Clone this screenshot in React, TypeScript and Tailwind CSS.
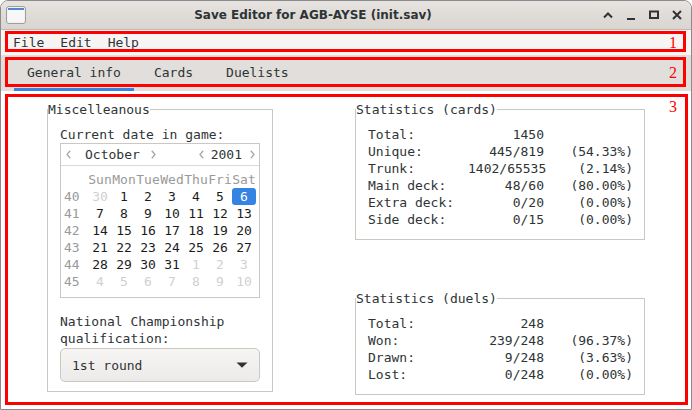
import React from "react";

type Day = { n: number; cur: boolean; sel?: boolean };

function buildRows() {
  const rows: { wk: number; days: Day[] }[] = [];
  for (let r = 0; r < 6; r++) {
    const days: Day[] = [];
    for (let c = 0; c < 7; c++) {
      const i = r * 7 + c;
      const d = i - 1;
      if (d < 0) days.push({ n: 30, cur: false });
      else if (d < 31) days.push({ n: d + 1, cur: true, sel: d + 1 === 6 });
      else days.push({ n: d - 30, cur: false });
    }
    rows.push({ wk: 40 + r, days });
  }
  return rows;
}

const Chev = ({ dir }: { dir: "l" | "r" }) => (
  <svg width="5" height="9" viewBox="0 0 5 9" className="block">
    <path
      d={dir === "l" ? "M4.2 0.8 L1 4.5 L4.2 8.2" : "M0.8 0.8 L4 4.5 L0.8 8.2"}
      fill="none"
      stroke="#a8a8a8"
      strokeWidth="1.3"
    />
  </svg>
);

const cardStats: [string, string, string][] = [
  ["Total:", "1450", ""],
  ["Unique:", "445/819", "(54.33%)"],
  ["Trunk:", "1402/65535", "(2.14%)"],
  ["Main deck:", "48/60", "(80.00%)"],
  ["Extra deck:", "0/20", "(0.00%)"],
  ["Side deck:", "0/15", "(0.00%)"],
];

const duelStats: [string, string, string][] = [
  ["Total:", "248", ""],
  ["Won:", "239/248", "(96.37%)"],
  ["Drawn:", "9/248", "(3.63%)"],
  ["Lost:", "0/248", "(0.00%)"],
];

function StatRows({ data }: { data: [string, string, string][] }) {
  return (
    <div className="flex flex-col pl-[12px] pt-[8px] pb-[11px]">
      {data.map(([a, b, c]) => (
        <div key={a} className="flex h-[17px] leading-[17px] whitespace-pre">
          <span className="w-[100px]">{a}</span>
          <span className="w-[76px] text-right">{b}</span>
          <span className="w-[89px] text-right">{c}</span>
        </div>
      ))}
    </div>
  );
}

export default function App() {
  const rows = buildRows();
  return (
    <div className="relative w-[692px] h-[410px] bg-white overflow-hidden font-['DejaVu_Sans_Mono',monospace] text-[13px] leading-[17px] text-[#2e3436]">
      <div className="w-[692px] h-[410px] flex flex-col rounded-t-[8px] border border-[#8b8b8b] overflow-hidden bg-white">
        {/* Title bar */}
        <div className="h-[29px] shrink-0 flex items-center bg-gradient-to-b from-[#e6e3e0] to-[#d9d5d1] border-b border-[#bfb9b3]">
          <div className="w-[25px] pl-[5px] flex items-center">
            <svg width="20" height="18" viewBox="0 0 20 18" className="block">
              <rect x="0.5" y="0.5" width="19" height="17" rx="2.5" fill="#f2f2f2" stroke="#9d9d9d" />
              <rect x="2" y="2" width="16" height="2" fill="#5b84c4" />
              <rect x="2" y="4" width="16" height="12" fill="#f7f7f7" />
            </svg>
          </div>
          <div className="flex-1 flex justify-center pl-[4px] font-['DejaVu_Sans',sans-serif] font-bold text-[12px] text-[#2e3436]">
            Save Editor for AGB-AYSE (init.sav)
          </div>
          <div className="flex items-center pr-[3px]">
            <div className="w-[23px] h-[24px] flex items-center justify-center">
              <svg width="10" height="8" viewBox="0 0 10 8" className="block">
                <path d="M1 6.5 L5 2.5 L9 6.5" fill="none" stroke="#2e3436" strokeWidth="2" />
              </svg>
            </div>
            <div className="w-[23px] h-[24px] flex items-center justify-center">
              <svg width="10" height="10" viewBox="0 0 10 10" className="block">
                <rect x="1" y="8" width="8" height="2" fill="#2e3436" />
              </svg>
            </div>
            <div className="w-[23px] h-[24px] flex items-center justify-center">
              <svg width="10" height="10" viewBox="0 0 10 10" className="block">
                <rect x="1" y="1.5" width="8" height="6.5" fill="none" stroke="#2e3436" strokeWidth="2" />
              </svg>
            </div>
            <div className="w-[23px] h-[24px] flex items-center justify-center">
              <svg width="10" height="10" viewBox="0 0 10 10" className="block">
                <path d="M1 1 L9 9 M9 1 L1 9" fill="none" stroke="#2e3436" strokeWidth="2" />
              </svg>
            </div>
          </div>
        </div>

        {/* Menubar */}
        <div className="h-[25px] shrink-0 flex items-center pl-[4px] bg-[#f6f5f4]">
          <span className="px-[8px]">File</span>
          <span className="px-[8px]">Edit</span>
          <span className="px-[8px]">Help</span>
        </div>

        {/* Tabs */}
        <div className="h-[36px] shrink-0 flex pl-[13px] gap-[7px] bg-[#e1dedb]">
          <div className="px-[13px] pt-[2px] flex items-center border-b-[3px] border-[#3584e4]">General info</div>
          <div className="px-[13px] pt-[2px] flex items-center border-b-[3px] border-transparent">Cards</div>
          <div className="px-[13px] pt-[2px] flex items-center border-b-[3px] border-transparent">Duelists</div>
        </div>

        {/* Content */}
        <div className="flex-1 flex items-start pl-[46px] pt-[10px] bg-white">
          {/* Miscelleanous */}
          <fieldset className="w-[226px] border border-[#cdc7c2]">
            <legend className="leading-[17px]">Miscelleanous</legend>
            <div className="flex flex-col px-[12px] pt-[8px] pb-[9px]">
              <div>Current date in game:</div>
              <div className="border border-[#cdc7c2] flex flex-col">
                <div className="h-[22px] flex items-center justify-between border-b border-[#dcd8d4]">
                  <div className="flex items-center pl-[5px]">
                    <Chev dir="l" />
                    <span className="ml-[14px]">October</span>
                    <span className="ml-[11px]"><Chev dir="r" /></span>
                  </div>
                  <div className="flex items-center pr-[4px]">
                    <Chev dir="l" />
                    <span className="ml-[7px]">2001</span>
                    <span className="ml-[8px]"><Chev dir="r" /></span>
                  </div>
                </div>
                <div className="pt-[4px] pb-[7px]">
                  <div className="grid grid-cols-[27px_repeat(7,24px)] h-[18px] items-center text-[#9a9a9a]">
                    <span />
                    {["Sun", "Mon", "Tue", "Wed", "Thu", "Fri", "Sat"].map((d) => (
                      <span key={d} className="text-center">{d}</span>
                    ))}
                  </div>
                  {rows.map((r) => (
                    <div key={r.wk} className="grid grid-cols-[27px_repeat(7,24px)] h-[17px]">
                      <span className="pl-[3px] text-[#9a9a9a]">{r.wk}</span>
                      {r.days.map((d, i) => (
                        <span
                          key={i}
                          className={
                            d.sel
                              ? "text-center bg-[#3584e4] text-white rounded-[3px]"
                              : d.cur
                              ? "text-center text-[#1c1c1c]"
                              : "text-center text-[#d0d0d0]"
                          }
                        >
                          {d.n}
                        </span>
                      ))}
                    </div>
                  ))}
                </div>
              </div>
              <div className="mt-[15px]">National Championship</div>
              <div>qualification:</div>
              <div className="mt-[1px] h-[34px] rounded-[5px] border border-[#cdc7c2] bg-gradient-to-b from-[#f6f5f4] to-[#edebe9] flex items-center justify-between pl-[11px] pr-[11px]">
                <span>1st round</span>
                <svg width="12" height="6" viewBox="0 0 12 6" className="block">
                  <path d="M0.5 0.5 L11.5 0.5 L6 5.8 Z" fill="#2e3436" />
                </svg>
              </div>
            </div>
          </fieldset>

          {/* Right column */}
          <div className="ml-[82px] flex flex-col">
            <fieldset className="w-[290px] border border-[#cdc7c2]">
              <legend className="leading-[17px]">Statistics (cards)</legend>
              <StatRows data={cardStats} />
            </fieldset>
            <fieldset className="mt-[50px] w-[290px] border border-[#cdc7c2]">
              <legend className="leading-[17px]">Statistics (duels)</legend>
              <StatRows data={duelStats} />
            </fieldset>
          </div>
        </div>
      </div>

      {/* Annotation overlays */}
      <div className="absolute left-[5px] top-[31px] w-[681px] h-[21px] border-[3px] border-[#ff0000] pointer-events-none" />
      <div className="absolute left-[5px] top-[57px] w-[681px] h-[30px] border-[3px] border-[#ff0000] pointer-events-none" />
      <div className="absolute left-[5px] top-[94px] w-[683px] h-[311px] border-[3px] border-[#ff0000] pointer-events-none" />
      <div className="absolute left-[669px] top-[35px] w-[8px] text-center font-['Liberation_Serif',serif] text-[16px] leading-[16px] text-[#ff0000]">1</div>
      <div className="absolute left-[669px] top-[65px] w-[8px] text-center font-['Liberation_Serif',serif] text-[16px] leading-[16px] text-[#ff0000]">2</div>
      <div className="absolute left-[669px] top-[99px] w-[8px] text-center font-['Liberation_Serif',serif] text-[16px] leading-[16px] text-[#ff0000]">3</div>
    </div>
  );
}
